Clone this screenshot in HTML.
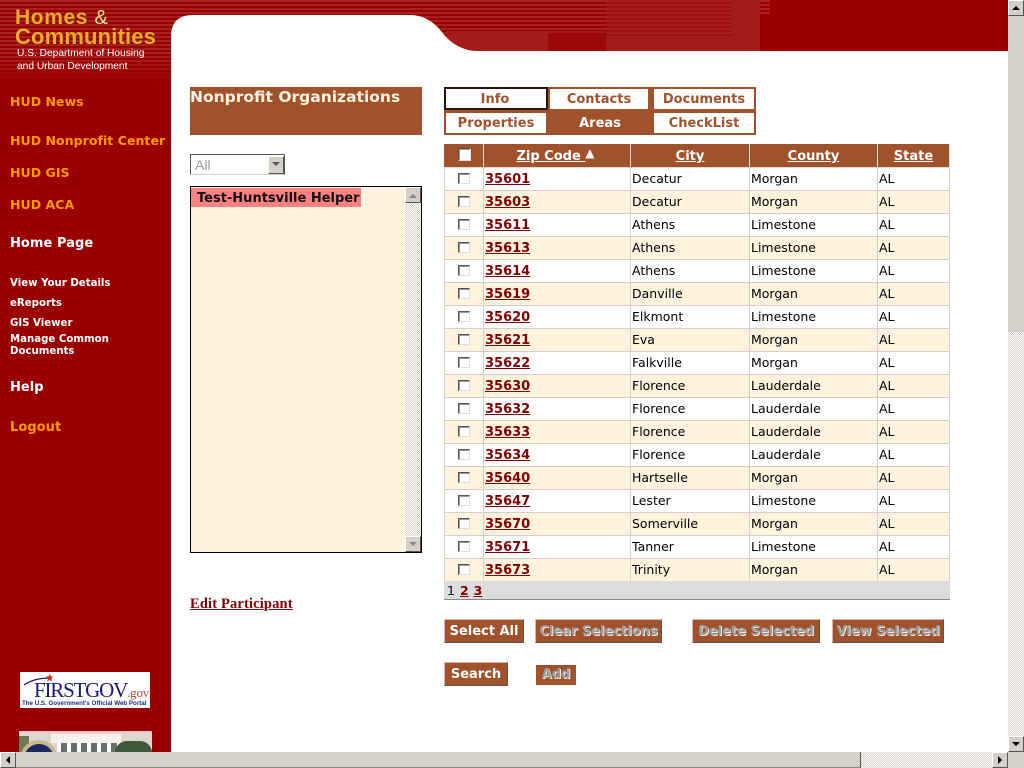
<!DOCTYPE html>
<html><head><meta charset="utf-8"><style>
html,body{margin:0;padding:0;width:1024px;height:768px;overflow:hidden;background:#fff}
body{position:relative;font-family:"DejaVu Sans","Liberation Sans",sans-serif;font-size:13px;color:#000}
.a{position:absolute;white-space:nowrap}
.n{position:absolute;left:10px;font-weight:bold;font-size:12.5px;line-height:16px;color:#ff9a00;white-space:nowrap;letter-spacing:.05px}
.w{color:#fff}
.s{position:absolute;left:10px;font-weight:bold;font-size:10.2px;line-height:12px;color:#fff;white-space:nowrap}
.tab{position:absolute;background:#fff;color:#a0522d;font-weight:bold;font-size:13px;text-align:center;line-height:21px}
.btn{position:absolute;background:#a0522d;color:#fff;font-weight:bold;font-size:13px;text-align:center;line-height:23px;box-sizing:border-box;border-top:1px solid #d8b8a8;border-left:1px solid #d8b8a8;border-right:1px solid #555;border-bottom:1px solid #555}
.dis{color:#9c9c9c;text-shadow:1px 1px 0 #eee}
table{position:absolute;left:444px;top:144px;width:506px;border-collapse:collapse;table-layout:fixed;font-size:12.5px}
td,th{padding:0;height:22px;border:1px solid #d4d0c8;overflow:hidden;white-space:nowrap;line-height:20px}
th{background:#a0522d;color:#fff;font-size:13px;border-color:#e8d8d0;border-top:1px solid #a0522d;border-left-color:#a0522d;line-height:20px}
th:not(:first-child){border-left:1px solid #e8d8d0}
th a{color:#fff;text-decoration:underline;position:relative;top:1px}
td{padding-left:1px}
td.z{font-weight:bold;font-size:13px;padding-left:1px;line-height:22px}
td.z a{color:#800000;text-decoration:underline;position:relative;top:1px}
td.c{text-align:center;padding:0;line-height:22px}
tr.o td{background:#fff3de}
.cb{display:inline-block;box-sizing:border-box;width:12px;height:11px;background:#fff;border:1px solid;border-color:#555 #ddd #ddd #555;box-shadow:inset 1px 1px 0 #999;vertical-align:-1px}
.dith{background:repeating-conic-gradient(#d4d0c8 0 25%,#fff 0 50%) 0 0/2px 2px}
.sb{position:absolute;background:#d4d0c8;box-sizing:border-box;border-top:1px solid #fff;border-left:1px solid #fff;border-right:1px solid #555;border-bottom:1px solid #555}
</style></head><body>

<svg class="a" style="left:0;top:0" width="1008" height="90" viewBox="0 0 1008 90">
<defs><pattern id="st" width="4" height="4" patternUnits="userSpaceOnUse"><rect width="4" height="4" fill="#990000"/><rect y="0" width="4" height="2" fill="#a92020"/></pattern>
<linearGradient id="fd" x1="0" y1="0" x2="0" y2="1"><stop offset="0" stop-color="#990000" stop-opacity="0"/><stop offset="1" stop-color="#990000"/></linearGradient></defs>
<rect width="1008" height="51" fill="#990000"/>
<rect width="171" height="84" fill="url(#st)"/>
<rect y="56" width="171" height="26" fill="url(#fd)"/>
<rect y="82" width="171" height="8" fill="#990000"/>
<rect width="770" height="15" fill="url(#st)"/>
<rect x="171" width="436" height="51" fill="url(#st)"/>
<rect x="447" y="31" width="161" height="20" fill="#a31c1c"/>
<rect x="548" y="33" width="58" height="18" fill="#9c0808"/>
<rect x="606" width="154" height="51" fill="#a31c1c"/>
<rect x="606" width="125" height="36" fill="url(#st)" opacity=".45"/>
<path d="M171 90V37Q171 15 193 15H410Q428 15 441 31Q456 51 478 51H1008V90Z" fill="#fff"/>
</svg>

<div class="a" style="left:171px;top:84px;width:837px;height:684px;background:#fff"></div>
<div class="a" style="left:0;top:84px;width:171px;height:684px;background:#990000"></div>

<div class="a" style="left:15px;top:6px;font:bold 21px/24px 'Liberation Sans',sans-serif;letter-spacing:.6px;color:#f0a830;text-shadow:1px 1px 0 #7a2a00">Homes <span style="font-weight:normal;font-size:20px;color:#f0d8a0">&amp;</span></div>
<div class="a" style="left:15px;top:24px;font:bold 22px/25px 'Liberation Sans',sans-serif;color:#f0a830;letter-spacing:.15px;text-shadow:1px 1px 0 #7a2a00">Communities</div>
<div class="a" style="left:17px;top:47px;font:10.2px/13px 'Liberation Sans',sans-serif;color:#fff">U.S. Department of Housing<br>and Urban Development</div>

<div class="n" style="top:94px">HUD News</div>
<div class="n" style="top:133px">HUD Nonprofit Center</div>
<div class="n" style="top:165px">HUD GIS</div>
<div class="n" style="top:197px">HUD ACA</div>
<div class="n w" style="top:236px;font-size:13px">Home Page</div>
<div class="s" style="top:278px">View Your Details</div>
<div class="s" style="top:298px">eReports</div>
<div class="s" style="top:318px">GIS Viewer</div>
<div class="s" style="top:334px">Manage Common</div>
<div class="s" style="top:346px">Documents</div>
<div class="n w" style="top:380px;font-size:13px">Help</div>
<div class="n" style="top:420px;font-size:13px">Logout</div>

<div class="a" style="left:20px;top:672px;width:130px;height:36px;background:#fff;overflow:hidden">
<svg class="a" style="left:0;top:0" width="130" height="36"><path d="M4 13Q14 6 30 6" stroke="#1a1a6e" stroke-width="1.2" fill="none"/><path d="M30 2l1 2.500 2.500 0-2 2 .7 3-2.500-1.500-2.500 1.500 .7-3-2-2 2.500 0z" fill="#c8302a"/></svg>
<div class="a" style="left:14px;top:7px;font:21px/22px 'Liberation Serif',serif;color:#1a1a6e;letter-spacing:-1.2px">FIRSTGOV<span style="font-size:13px;color:#c8403a;letter-spacing:-.2px">.gov</span></div>
<div class="a" style="left:2px;top:27px;font:bold 6.2px/9px 'Liberation Sans',sans-serif;color:#1a2a80">The U.S. Government's Official Web Portal</div>
</div>

<div class="a" style="left:19px;top:731px;width:133px;height:21px;background:#dcd8d0;overflow:hidden">
<div class="a" style="left:0;top:0;width:133px;height:2px;background:#f4c8c0"></div>
<div class="a" style="left:32px;top:3px;width:70px;height:9px;background:#f4f0ec"></div>
<div class="a" style="left:38px;top:12px;width:62px;height:9px;background:repeating-linear-gradient(90deg,#fff 0 4px,#65706a 4px 10px)"></div>
<div class="a" style="left:96px;top:10px;width:37px;height:12px;background:#3f5a3a;border-radius:12px 12px 0 0"></div>
<div class="a" style="left:0;top:5px;width:10px;height:16px;background:#6c7a58"></div>
<div class="a" style="left:1px;top:9px;width:38px;height:38px;box-sizing:border-box;border-radius:50%;background:#1c2860;border:4px solid #c8b890"></div>
</div>

<div class="a" style="left:190px;top:87px;width:232px;height:48px;background:#a0522d;color:#fff3de;font-weight:bold;font-size:15.500px;line-height:20px">Nonprofit Organizations</div>

<div class="a" style="left:190px;top:154px;width:95px;height:21px;box-sizing:border-box;border:1px solid;border-color:#555 #555 #d4d0c8 #555;background:#fff;color:#999;font:14px/20px 'Liberation Sans',sans-serif;padding-left:4px">All</div>
<div class="sb" style="left:268px;top:156px;width:16px;height:18px"></div>
<svg class="a" style="left:272px;top:162px" width="9" height="6"><path d="M0 0H8L4 4Z" fill="#555"/></svg>

<div class="a" style="left:190px;top:186px;width:232px;height:367px;box-sizing:border-box;border:1px solid #000;background:#fff3de"></div>
<div class="a" style="left:191px;top:188px;width:170px;height:19px;background:#ff8080;font-weight:bold;font-size:13px;line-height:21px;text-indent:6px;color:#111">Test-Huntsville Helper</div>
<div class="a dith" style="left:405px;top:187px;width:16px;height:365px"></div>
<div class="sb" style="left:405px;top:187px;width:16px;height:16px"></div>
<svg class="a" style="left:409px;top:193px" width="9" height="6"><path d="M0 5H8L4 1Z" fill="#888"/></svg>
<div class="sb" style="left:405px;top:536px;width:16px;height:16px"></div>
<svg class="a" style="left:409px;top:542px" width="9" height="6"><path d="M0 0H8L4 4Z" fill="#888"/></svg>

<div class="a" style="left:190px;top:595px;font:bold 14.500px/18px 'Liberation Serif',serif;color:#800000;text-decoration:underline;letter-spacing:.15px">Edit Participant</div>

<div class="a" style="left:444px;top:87px;width:312px;height:48px;background:#a0522d"></div>
<div class="tab" style="left:444px;top:87px;width:100px;height:19px;border:2px solid #2a1008;text-indent:-2px">Info</div>
<div class="tab" style="left:550px;top:89px;width:98px;height:20px">Contacts</div>
<div class="tab" style="left:654px;top:89px;width:100px;height:20px">Documents</div>
<div class="tab" style="left:446px;top:113px;width:100px;height:20px">Properties</div>
<div class="tab" style="left:550px;top:113px;width:98px;height:20px;background:none;color:#fff;text-indent:2px">Areas</div>
<div class="tab" style="left:654px;top:113px;width:100px;height:20px">CheckList</div>

<table>
<colgroup><col style="width:39px"><col style="width:147px"><col style="width:119px"><col style="width:128px"><col style="width:72px"></colgroup>
<tr><th><span class="cb" style="width:13px;height:13px;position:relative;top:1px"></span></th><th style="padding-right:3px"><a>Zip Code </a><span style="font-size:12px;line-height:0;vertical-align:2px">▲</span></th><th><a>City</a></th><th><a>County</a></th><th><a>State</a></th></tr>
<tr><td class="c"><span class="cb"></span></td><td class="z"><a>35601</a></td><td>Decatur</td><td>Morgan</td><td>AL</td></tr>
<tr class="o"><td class="c"><span class="cb"></span></td><td class="z"><a>35603</a></td><td>Decatur</td><td>Morgan</td><td>AL</td></tr>
<tr><td class="c"><span class="cb"></span></td><td class="z"><a>35611</a></td><td>Athens</td><td>Limestone</td><td>AL</td></tr>
<tr class="o"><td class="c"><span class="cb"></span></td><td class="z"><a>35613</a></td><td>Athens</td><td>Limestone</td><td>AL</td></tr>
<tr><td class="c"><span class="cb"></span></td><td class="z"><a>35614</a></td><td>Athens</td><td>Limestone</td><td>AL</td></tr>
<tr class="o"><td class="c"><span class="cb"></span></td><td class="z"><a>35619</a></td><td>Danville</td><td>Morgan</td><td>AL</td></tr>
<tr><td class="c"><span class="cb"></span></td><td class="z"><a>35620</a></td><td>Elkmont</td><td>Limestone</td><td>AL</td></tr>
<tr class="o"><td class="c"><span class="cb"></span></td><td class="z"><a>35621</a></td><td>Eva</td><td>Morgan</td><td>AL</td></tr>
<tr><td class="c"><span class="cb"></span></td><td class="z"><a>35622</a></td><td>Falkville</td><td>Morgan</td><td>AL</td></tr>
<tr class="o"><td class="c"><span class="cb"></span></td><td class="z"><a>35630</a></td><td>Florence</td><td>Lauderdale</td><td>AL</td></tr>
<tr><td class="c"><span class="cb"></span></td><td class="z"><a>35632</a></td><td>Florence</td><td>Lauderdale</td><td>AL</td></tr>
<tr class="o"><td class="c"><span class="cb"></span></td><td class="z"><a>35633</a></td><td>Florence</td><td>Lauderdale</td><td>AL</td></tr>
<tr><td class="c"><span class="cb"></span></td><td class="z"><a>35634</a></td><td>Florence</td><td>Lauderdale</td><td>AL</td></tr>
<tr class="o"><td class="c"><span class="cb"></span></td><td class="z"><a>35640</a></td><td>Hartselle</td><td>Morgan</td><td>AL</td></tr>
<tr><td class="c"><span class="cb"></span></td><td class="z"><a>35647</a></td><td>Lester</td><td>Limestone</td><td>AL</td></tr>
<tr class="o"><td class="c"><span class="cb"></span></td><td class="z"><a>35670</a></td><td>Somerville</td><td>Morgan</td><td>AL</td></tr>
<tr><td class="c"><span class="cb"></span></td><td class="z"><a>35671</a></td><td>Tanner</td><td>Limestone</td><td>AL</td></tr>
<tr class="o"><td class="c"><span class="cb"></span></td><td class="z"><a>35673</a></td><td>Trinity</td><td>Morgan</td><td>AL</td></tr>
</table>
<div class="a" style="left:444px;top:581px;width:506px;height:19px;box-sizing:border-box;background:#dcdcdc;border-bottom:1px solid #888;line-height:19px;font-size:12.5px;padding-left:3px">1 <b style="color:#800000;text-decoration:underline;margin-left:1px">2</b> <b style="color:#800000;text-decoration:underline;margin-left:1px">3</b></div>

<div class="btn" style="left:444px;top:619px;width:80px;height:24px">Select All</div>
<div class="btn dis" style="left:535px;top:619px;width:127px;height:24px">Clear Selections</div>
<div class="btn dis" style="left:692px;top:619px;width:128px;height:24px">Delete Selected</div>
<div class="btn dis" style="left:832px;top:619px;width:112px;height:24px">View Selected</div>
<div class="btn" style="left:444px;top:662px;width:64px;height:24px">Search</div>
<div class="btn dis" style="left:536px;top:665px;width:40px;height:20px;border:0;line-height:20px">Add</div>

<div class="a dith" style="left:1008px;top:0;width:16px;height:752px"></div>
<div class="sb" style="left:1008px;top:0;width:16px;height:16px"></div>
<svg class="a" style="left:1012px;top:5px" width="9" height="6"><path d="M0 5H8L4 1Z" fill="#000"/></svg>
<div class="a" style="left:1008px;top:16px;width:16px;height:316px;background:#d4d0c8"></div>
<div class="sb" style="left:1008px;top:736px;width:16px;height:16px"></div>
<svg class="a" style="left:1012px;top:742px" width="9" height="6"><path d="M0 0H8L4 4Z" fill="#000"/></svg>

<div class="a dith" style="left:0;top:752px;width:1008px;height:16px"></div>
<div class="sb" style="left:0;top:752px;width:16px;height:16px"></div>
<svg class="a" style="left:5px;top:756px" width="6" height="9"><path d="M5 0V8L1 4Z" fill="#000"/></svg>
<div class="a" style="left:16px;top:752px;width:845px;height:16px;background:#d4d0c8;box-sizing:border-box;border-right:1px solid #555;border-bottom:1px solid #888"></div>
<div class="sb" style="left:992px;top:752px;width:16px;height:16px"></div>
<svg class="a" style="left:997px;top:756px" width="6" height="9"><path d="M1 0V8L5 4Z" fill="#000"/></svg>
<div class="a" style="left:1008px;top:752px;width:16px;height:16px;background:#d4d0c8"></div>
</body></html>
